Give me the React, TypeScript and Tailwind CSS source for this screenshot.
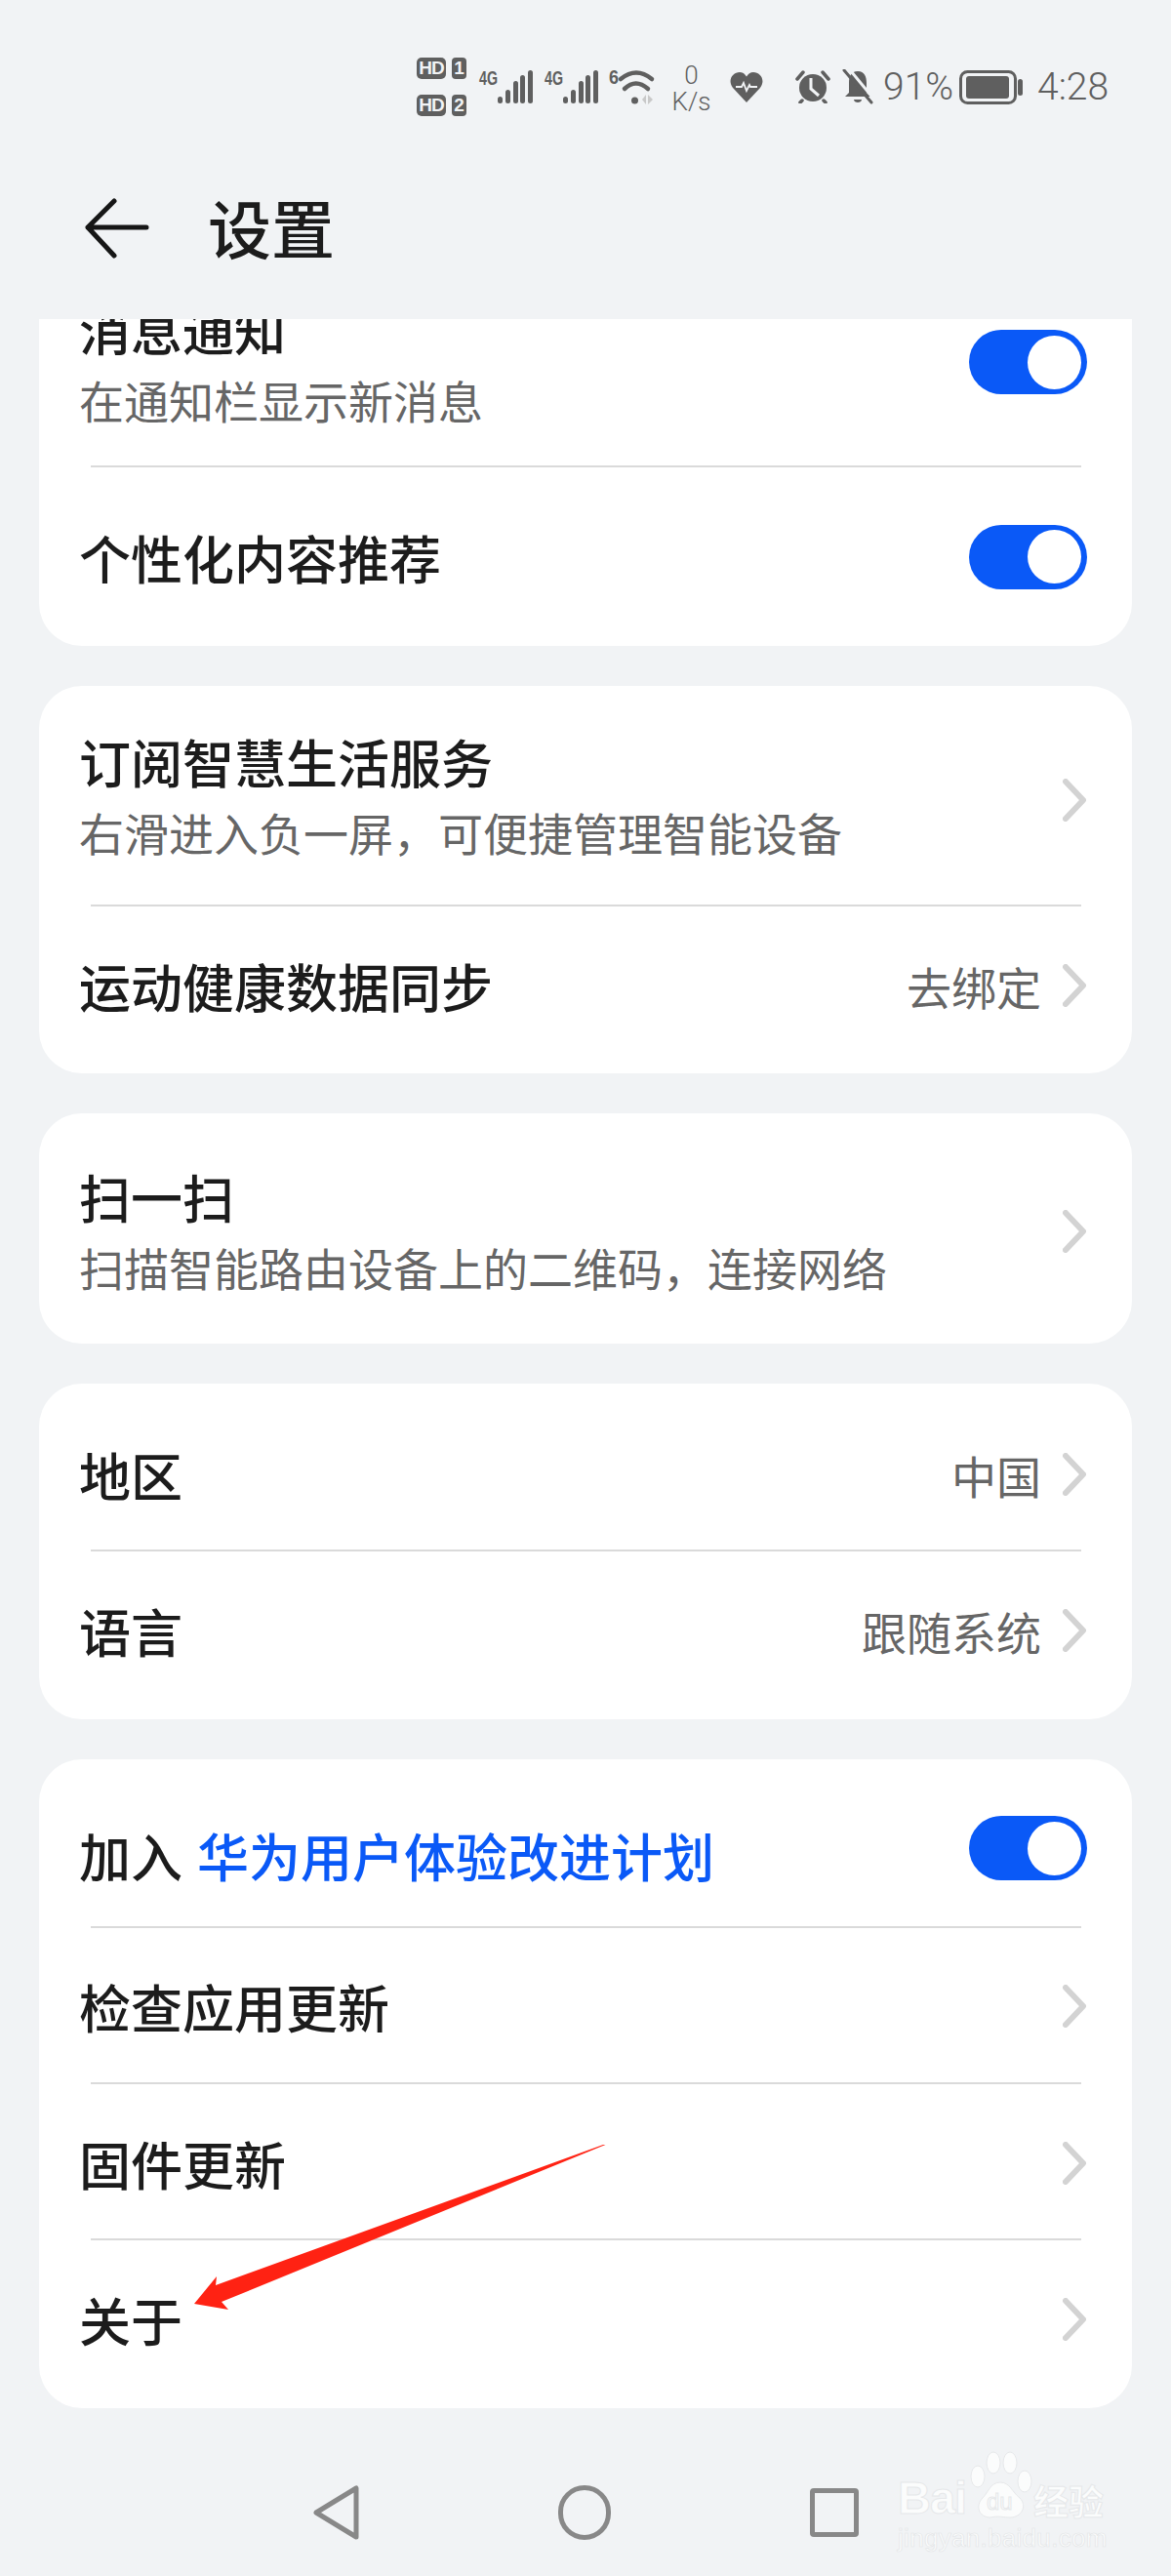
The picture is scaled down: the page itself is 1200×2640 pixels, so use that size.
import React from "react";

const CJK = "font-['Noto_Sans_CJK_SC','Noto_Sans',sans-serif]";

function Toggle({ className = "" }: { className?: string }) {
  return (
    <div className={"flex h-[66px] w-[121px] shrink-0 items-center justify-end rounded-full bg-[#0a59f7] pr-[6px] " + className}>
      <div className="h-[55px] w-[55px] rounded-full bg-white" />
    </div>
  );
}

function Chevron({ className = "" }: { className?: string }) {
  return (
    <svg className={"shrink-0 " + className} width="24" height="44" viewBox="0 0 24 44" fill="none">
      <path d="M3 3 L21 22 L3 41" stroke="#d3d3d3" strokeWidth="6" strokeLinecap="round" strokeLinejoin="round" />
    </svg>
  );
}

function Divider() {
  return <div className="ml-[53px] mr-[52px] h-[2px] bg-[#dadada]" />;
}

function Title({ children }: { children: React.ReactNode }) {
  return <div className="text-[53px] leading-[72px] font-medium text-[#1c1c1c] whitespace-nowrap">{children}</div>;
}

function Sub({ children }: { children: React.ReactNode }) {
  return <div className="mt-[6px] text-[46px] leading-[60px] text-[#666666] whitespace-nowrap">{children}</div>;
}

function Value({ children }: { children: React.ReactNode }) {
  return <span className="mr-[22px] text-[46px] leading-[60px] text-[#666666] whitespace-nowrap">{children}</span>;
}

function Card({ children }: { children: React.ReactNode }) {
  return <div className="mx-[40px] mb-[41px] overflow-hidden rounded-[44px] bg-white">{children}</div>;
}

function Signal() {
  return (
    <svg className="overflow-visible" width="55" height="34" viewBox="0 0 55 34" fill="#5f5f5f">
      <text x="0" y="15" fontSize="21" fontWeight="700" fontFamily="'Liberation Sans',sans-serif" textLength="19" lengthAdjust="spacingAndGlyphs">4G</text>
      <rect x="19" y="27" width="5" height="7" rx="2.5" />
      <rect x="27" y="20" width="5" height="14" rx="2.5" />
      <rect x="35" y="11" width="5" height="23" rx="2.5" />
      <rect x="42" y="5" width="5" height="29" rx="2.5" />
      <rect x="50" y="0" width="5" height="34" rx="2.5" />
    </svg>
  );
}

function HD({ n }: { n: string }) {
  return (
    <div className="flex h-[22px] gap-[6px] font-['Liberation_Sans',sans-serif] text-[19px] leading-[22px] font-bold text-[#f1f3f5]">
      <div className="flex w-[30px] items-center justify-center rounded-[5px] bg-[#5f5f5f] tracking-[-1px]">HD</div>
      <div className="flex w-[15px] items-center justify-center rounded-[4px] bg-[#5f5f5f]">{n}</div>
    </div>
  );
}

function StatusBar() {
  return (
    <div className="flex h-[178px] items-center pl-[427px] font-['Roboto',sans-serif] font-light text-[#5f5f5f]">
      <div className="flex w-[51px] flex-col gap-[16px]">
        <HD n="1" />
        <HD n="2" />
      </div>
      <div className="ml-[13px]"><Signal /></div>
      <div className="ml-[12px]"><Signal /></div>
      <svg className="ml-[11px] overflow-visible" width="46" height="36" viewBox="0 0 46 36" fill="none">
        <text x="0" y="15" fontSize="21" fontWeight="700" fill="#5f5f5f" fontFamily="'Liberation Sans',sans-serif" textLength="10" lengthAdjust="spacingAndGlyphs">6</text>
        <path d="M12 10 Q28 -3 44 10" stroke="#5f5f5f" strokeWidth="4.5" strokeLinecap="round" />
        <path d="M16 20 Q27.5 9 40 20" stroke="#5f5f5f" strokeWidth="4.5" strokeLinecap="round" />
        <circle cx="26.5" cy="32" r="3.5" fill="#5f5f5f" />
        <path d="M34 31 L38 26 V36 Z M40 26 L45 31 L40 36 Z" fill="#c9c9c9" />
      </svg>
      <div className="ml-[20px] flex w-[37px] flex-col items-center text-[26px] leading-[28px] whitespace-nowrap">
        <div>0</div>
        <div className="mt-[1px] text-[26px] leading-[24px]">K/s</div>
      </div>
      <svg className="ml-[21px]" width="34" height="31" viewBox="0 0 34 31">
        <path d="M17 31 L3 16 C-3 8 3 0 10 0 C13 0 15.5 2 17 4.5 C18.5 2 21 0 24 0 C31 0 37 8 31 16 Z" fill="#5f5f5f" />
        <path d="M6 15 H12 L14 11 L17 19 L20 13 L21 15 H28" fill="none" stroke="#f1f3f5" strokeWidth="1.8" />
      </svg>
      <svg className="ml-[33px]" width="36" height="34" viewBox="0 0 36 34">
        <circle cx="18" cy="18" r="14" fill="#5f5f5f" />
        <path d="M16 8 V19 L24 26" fill="none" stroke="#f1f3f5" strokeWidth="3" />
        <path d="M2 9 L8 2 M34 9 L28 2 M7 31 L5 33 M29 31 L31 33" stroke="#5f5f5f" strokeWidth="3.5" strokeLinecap="round" />
      </svg>
      <svg className="ml-[12px]" width="32" height="36" viewBox="0 0 32 36">
        <path d="M16 2 C23 2 25 8 25 14 V24 L29 28 H3 L7 24 V14 C7 8 9 2 16 2 Z" fill="#5f5f5f" />
        <path d="M12 31 H20 C20 35 12 35 12 31 Z" fill="#5f5f5f" />
        <path d="M5 -3 L33 31" stroke="#f1f3f5" strokeWidth="3" />
        <path d="M2 1 L30 34" stroke="#5f5f5f" strokeWidth="3" strokeLinecap="round" />
      </svg>
      <div className="ml-[10px] w-[69px] text-[39px] leading-[44px] whitespace-nowrap">91%</div>
      <svg className="ml-[9px]" width="65" height="35" viewBox="0 0 65 35" fill="none">
        <rect x="1.5" y="1.5" width="56" height="32" rx="7" stroke="#5f5f5f" strokeWidth="3" />
        <rect x="7" y="6" width="44" height="23" rx="3" fill="#5f5f5f" />
        <rect x="60" y="9" width="5" height="17" rx="2.5" fill="#5f5f5f" />
      </svg>
      <div className="ml-[15px] text-[39px] leading-[44px] whitespace-nowrap">4:28</div>
    </div>
  );
}

function Header() {
  return (
    <div className="flex h-[149px] items-center pb-[37px] pl-[87px]">
      <svg width="66" height="62" viewBox="0 0 66 62" fill="none">
        <path d="M30 3 L3 30 L30 59 M3 30 H63" stroke="#161616" strokeWidth="5" strokeLinecap="round" strokeLinejoin="round" />
      </svg>
      <div className="ml-[60px] mb-[4px] text-[65px] leading-[80px] font-medium text-[#1c1c1c]">设置</div>
    </div>
  );
}

function NavBar() {
  return (
    <div className="flex h-[171px] items-center pt-[41px] pl-[321px]">
      <svg width="47" height="56" viewBox="0 0 47 56" fill="none">
        <path d="M44 3 V53 L3 28 Z" stroke="#888888" strokeWidth="5" strokeLinejoin="round" />
      </svg>
      <div className="ml-[204px] h-[56px] w-[54px] rounded-full border-[5px] border-[#888888]" />
      <div className="ml-[204px] h-[50px] w-[50px] rounded-[4px] border-[5px] border-[#888888]" />
    </div>
  );
}

function Watermark() {
  const outline = "text-[#fbfcfc] [-webkit-text-stroke:1px_#e6e8ea] font-bold";
  return (
    <div className="absolute left-[920px] top-[2512px] h-[102px] w-[218px]">
      <div className="flex items-end">
        <div className={"w-[73px] text-[47px] leading-[44px] tracking-[-1px] font-['Liberation_Sans',sans-serif] " + outline}>Bai</div>
        <svg width="66" height="70" viewBox="0 0 66 70" fill="#fbfcfc" stroke="#e6e8ea" strokeWidth="1">
          <ellipse cx="9" cy="26" rx="7" ry="11" />
          <ellipse cx="25" cy="12" rx="7" ry="11" />
          <ellipse cx="42" cy="12" rx="7" ry="11" />
          <ellipse cx="57" cy="31" rx="7" ry="11" />
          <path d="M32 32 C42 32 44 42 52 48 C60 56 54 68 42 68 C36 68 30 66 22 68 C10 68 6 56 14 48 C20 42 22 32 32 32 Z" />
          <text x="18" y="60" fontSize="24" fontFamily="'Liberation Sans',sans-serif">du</text>
        </svg>
        <div className={"whitespace-nowrap text-[36px] leading-[40px] font-['Noto_Sans_CJK_SC',sans-serif] " + outline}>经验</div>
      </div>
      <div className="mt-[6px] font-['Liberation_Sans',sans-serif] text-[26px] leading-[26px] tracking-[0.3px] whitespace-nowrap text-[#fbfcfc] [-webkit-text-stroke:0.7px_#e3e5e7]">
        jingyan.baidu.com
      </div>
    </div>
  );
}

function RedArrow() {
  return (
    <svg className="absolute left-[190px] top-[2190px]" width="440" height="190" viewBox="190 2190 440 190">
      <polygon points="620.5,2198 618,2198 221,2342 222,2333 199,2361 234,2367 227,2359" fill="#ff2213" />
    </svg>
  );
}

export default function App() {
  return (
    <div className={"relative h-[2640px] w-[1200px] overflow-hidden bg-[#f1f3f5] " + CJK}>
      <StatusBar />
      <Header />
      <div className="h-[2142px] overflow-hidden">
        <div className="mx-[40px] mb-[41px] overflow-hidden rounded-b-[44px] bg-white">
          <div className="flex h-[150px] items-start pl-[41px] pr-[46px]">
            <div className="-mt-[26px] flex-1">
              <Title>消息通知</Title>
              <Sub>在通知栏显示新消息</Sub>
            </div>
            <Toggle className="mt-[11px]" />
          </div>
          <Divider />
          <div className="flex h-[183px] items-center pl-[41px] pr-[46px]">
            <div className="flex-1"><Title>个性化内容推荐</Title></div>
            <Toggle />
          </div>
        </div>

        <Card>
          <div className="flex h-[224px] items-center pb-[4px] pl-[41px] pr-[47px]">
            <div className="flex-1">
              <Title>订阅智慧生活服务</Title>
              <Sub>右滑进入负一屏，可便捷管理智能设备</Sub>
            </div>
            <Chevron className="mt-[14px]" />
          </div>
          <Divider />
          <div className="flex h-[171px] items-center pb-[9px] pl-[41px] pr-[47px]">
            <div className="flex-1"><Title>运动健康数据同步</Title></div>
            <Value>去绑定</Value>
            <Chevron />
          </div>
        </Card>

        <Card>
          <div className="flex h-[236px] items-center pl-[41px] pr-[47px]">
            <div className="flex-1">
              <Title>扫一扫</Title>
              <Sub>扫描智能路由设备上的二维码，连接网络</Sub>
            </div>
            <Chevron className="mt-[5px]" />
          </div>
        </Card>

        <Card>
          <div className="flex h-[170px] items-center pt-[16px] pl-[41px] pr-[47px]">
            <div className="flex-1"><Title>地区</Title></div>
            <Value>中国</Value>
            <Chevron />
          </div>
          <Divider />
          <div className="flex h-[172px] items-center pb-[11px] pl-[41px] pr-[47px]">
            <div className="flex-1"><Title>语言</Title></div>
            <Value>跟随系统</Value>
            <Chevron />
          </div>
        </Card>

        <Card>
          <div className="flex h-[171px] items-center pt-[11px] pl-[41px] pr-[46px]">
            <div className="mt-[14px] flex-1">
              <Title>加入 <span className="ml-[3px] text-[#0a59f7]">华为用户体验改进计划</span></Title>
            </div>
            <Toggle />
          </div>
          <Divider />
          <div className="flex h-[158px] items-center pt-[2px] pl-[41px] pr-[47px]">
            <div className="flex-1"><Title>检查应用更新</Title></div>
            <Chevron />
          </div>
          <Divider />
          <div className="flex h-[158px] items-center pt-[4px] pl-[41px] pr-[47px]">
            <div className="flex-1"><Title>固件更新</Title></div>
            <Chevron />
          </div>
          <Divider />
          <div className="flex h-[172px] items-center pb-[10px] pl-[41px] pr-[47px]">
            <div className="flex-1"><Title>关于</Title></div>
            <Chevron />
          </div>
        </Card>
      </div>
      <NavBar />
      <RedArrow />
      <Watermark />
    </div>
  );
}
